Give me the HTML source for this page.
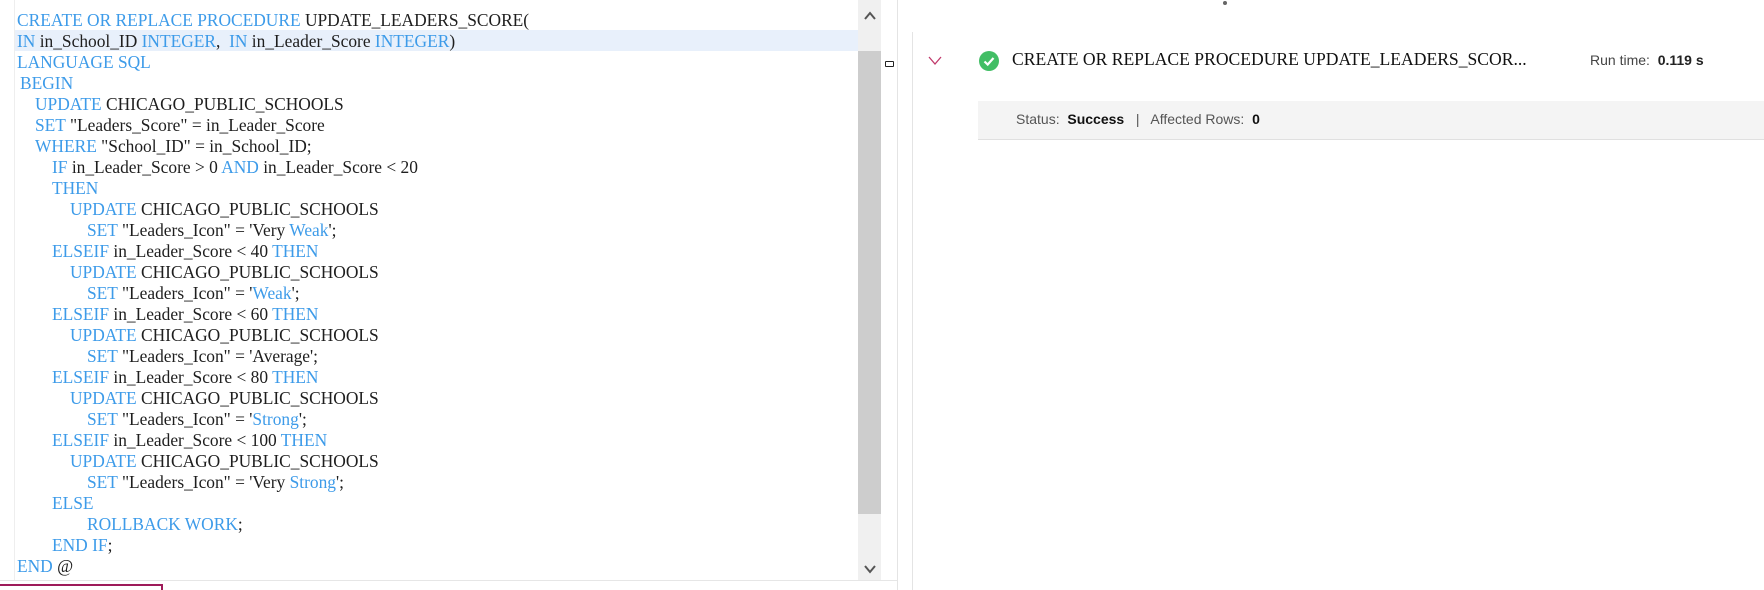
<!DOCTYPE html>
<html><head><style>
body{margin:0;width:1764px;height:590px;background:#fff;position:relative;overflow:hidden;font-family:"Liberation Serif",serif}
.ln{position:absolute;font-size:17.4px;color:#1e1e1e;white-space:pre;line-height:21px}
.k{color:#3d9be9}
.s{position:absolute;font-family:"Liberation Sans",sans-serif;font-size:14px;color:#555;white-space:pre}
</style></head><body>
<div style="position:absolute;left:14px;top:0;width:1px;height:580px;background:#eee"></div>
<div style="position:absolute;left:15px;top:30px;width:843px;height:21px;background:#e8f0fb"></div>
<div style="position:absolute;left:858px;top:0;width:23px;height:580px;background:#f0f0f0"></div>
<div style="position:absolute;left:858px;top:51px;width:23px;height:463px;background:#cdcdcd"></div>
<svg style="position:absolute;left:863px;top:10px" width="14" height="12"><path d="M2 9 L7 3 L12 9" stroke="#555" stroke-width="2" fill="none"/></svg>
<svg style="position:absolute;left:863px;top:563px" width="14" height="12"><path d="M2 3 L7 9 L12 3" stroke="#555" stroke-width="2" fill="none"/></svg>
<div style="position:absolute;left:0;top:580px;width:898px;height:1px;background:#e6e6e6"></div>
<div style="position:absolute;left:0;top:584px;width:162px;height:2px;background:#9e1b5a"></div>
<div style="position:absolute;left:161px;top:584px;width:2px;height:6px;background:#9e1b5a"></div>
<div style="position:absolute;left:885px;top:61px;width:7px;height:4px;border:1px solid #222;border-radius:1px"></div>
<div style="position:absolute;left:897px;top:0;width:1px;height:590px;background:#e4e4e4"></div>
<div style="position:absolute;left:912px;top:32px;width:1px;height:558px;background:#e4e4e4"></div>
<div style="position:absolute;left:1223px;top:1px;width:4px;height:4px;border-radius:50%;background:#666"></div>

<div class="ln" style="left:17px;top:10px"><span class="k">CREATE OR REPLACE PROCEDURE</span> UPDATE_LEADERS_SCORE(</div>
<div class="ln" style="left:17px;top:31px"><span class="k">IN</span> in_School_ID <span class="k">INTEGER</span>,  <span class="k">IN</span> in_Leader_Score <span class="k">INTEGER</span>)</div>
<div class="ln" style="left:17px;top:52px"><span class="k">LANGUAGE SQL</span></div>
<div class="ln" style="left:20px;top:73px"><span class="k">BEGIN</span></div>
<div class="ln" style="left:35px;top:94px"><span class="k">UPDATE</span> CHICAGO_PUBLIC_SCHOOLS</div>
<div class="ln" style="left:35px;top:115px"><span class="k">SET</span> "Leaders_Score" = in_Leader_Score</div>
<div class="ln" style="left:35px;top:136px"><span class="k">WHERE</span> "School_ID" = in_School_ID;</div>
<div class="ln" style="left:52px;top:157px"><span class="k">IF</span> in_Leader_Score &gt; 0 <span class="k">AND</span> in_Leader_Score &lt; 20</div>
<div class="ln" style="left:52px;top:178px"><span class="k">THEN</span></div>
<div class="ln" style="left:70px;top:199px"><span class="k">UPDATE</span> CHICAGO_PUBLIC_SCHOOLS</div>
<div class="ln" style="left:87px;top:220px"><span class="k">SET</span> "Leaders_Icon" = 'Very <span class="k">Weak</span>';</div>
<div class="ln" style="left:52px;top:241px"><span class="k">ELSEIF</span> in_Leader_Score &lt; 40 <span class="k">THEN</span></div>
<div class="ln" style="left:70px;top:262px"><span class="k">UPDATE</span> CHICAGO_PUBLIC_SCHOOLS</div>
<div class="ln" style="left:87px;top:283px"><span class="k">SET</span> "Leaders_Icon" = '<span class="k">Weak</span>';</div>
<div class="ln" style="left:52px;top:304px"><span class="k">ELSEIF</span> in_Leader_Score &lt; 60 <span class="k">THEN</span></div>
<div class="ln" style="left:70px;top:325px"><span class="k">UPDATE</span> CHICAGO_PUBLIC_SCHOOLS</div>
<div class="ln" style="left:87px;top:346px"><span class="k">SET</span> "Leaders_Icon" = 'Average';</div>
<div class="ln" style="left:52px;top:367px"><span class="k">ELSEIF</span> in_Leader_Score &lt; 80 <span class="k">THEN</span></div>
<div class="ln" style="left:70px;top:388px"><span class="k">UPDATE</span> CHICAGO_PUBLIC_SCHOOLS</div>
<div class="ln" style="left:87px;top:409px"><span class="k">SET</span> "Leaders_Icon" = '<span class="k">Strong</span>';</div>
<div class="ln" style="left:52px;top:430px"><span class="k">ELSEIF</span> in_Leader_Score &lt; 100 <span class="k">THEN</span></div>
<div class="ln" style="left:70px;top:451px"><span class="k">UPDATE</span> CHICAGO_PUBLIC_SCHOOLS</div>
<div class="ln" style="left:87px;top:472px"><span class="k">SET</span> "Leaders_Icon" = 'Very <span class="k">Strong</span>';</div>
<div class="ln" style="left:52px;top:493px"><span class="k">ELSE</span></div>
<div class="ln" style="left:87px;top:514px"><span class="k">ROLLBACK WORK</span>;</div>
<div class="ln" style="left:52px;top:535px"><span class="k">END IF</span>;</div>
<div class="ln" style="left:17px;top:556px"><span class="k">END</span> @</div>

<svg style="position:absolute;left:927px;top:54px" width="16" height="12"><path d="M2 3 L8 10 L14 3" stroke="#c0396b" stroke-width="1.3" fill="none"/></svg>
<svg style="position:absolute;left:979px;top:51px" width="20" height="20"><circle cx="10" cy="10" r="10" fill="#42be65"/><path d="M5.5 10.5 L8.7 13.5 L14.5 7" stroke="#fff" stroke-width="2.2" fill="none"/></svg>
<div style="position:absolute;left:1012px;top:49px;font-size:17.6px;color:#111;white-space:pre">CREATE OR REPLACE PROCEDURE UPDATE_LEADERS_SCOR...</div>
<div class="s" style="left:1590px;top:52px;color:#444">Run time:  <b style="color:#222">0.119 s</b></div>
<div style="position:absolute;left:978px;top:101px;width:786px;height:38px;background:#f4f4f4;border-bottom:1px solid #e0e0e0"></div>
<div class="s" style="left:1016px;top:111px">Status:  <b style="color:#111">Success</b>   |   Affected Rows:  <b style="color:#111">0</b></div>
</body></html>
